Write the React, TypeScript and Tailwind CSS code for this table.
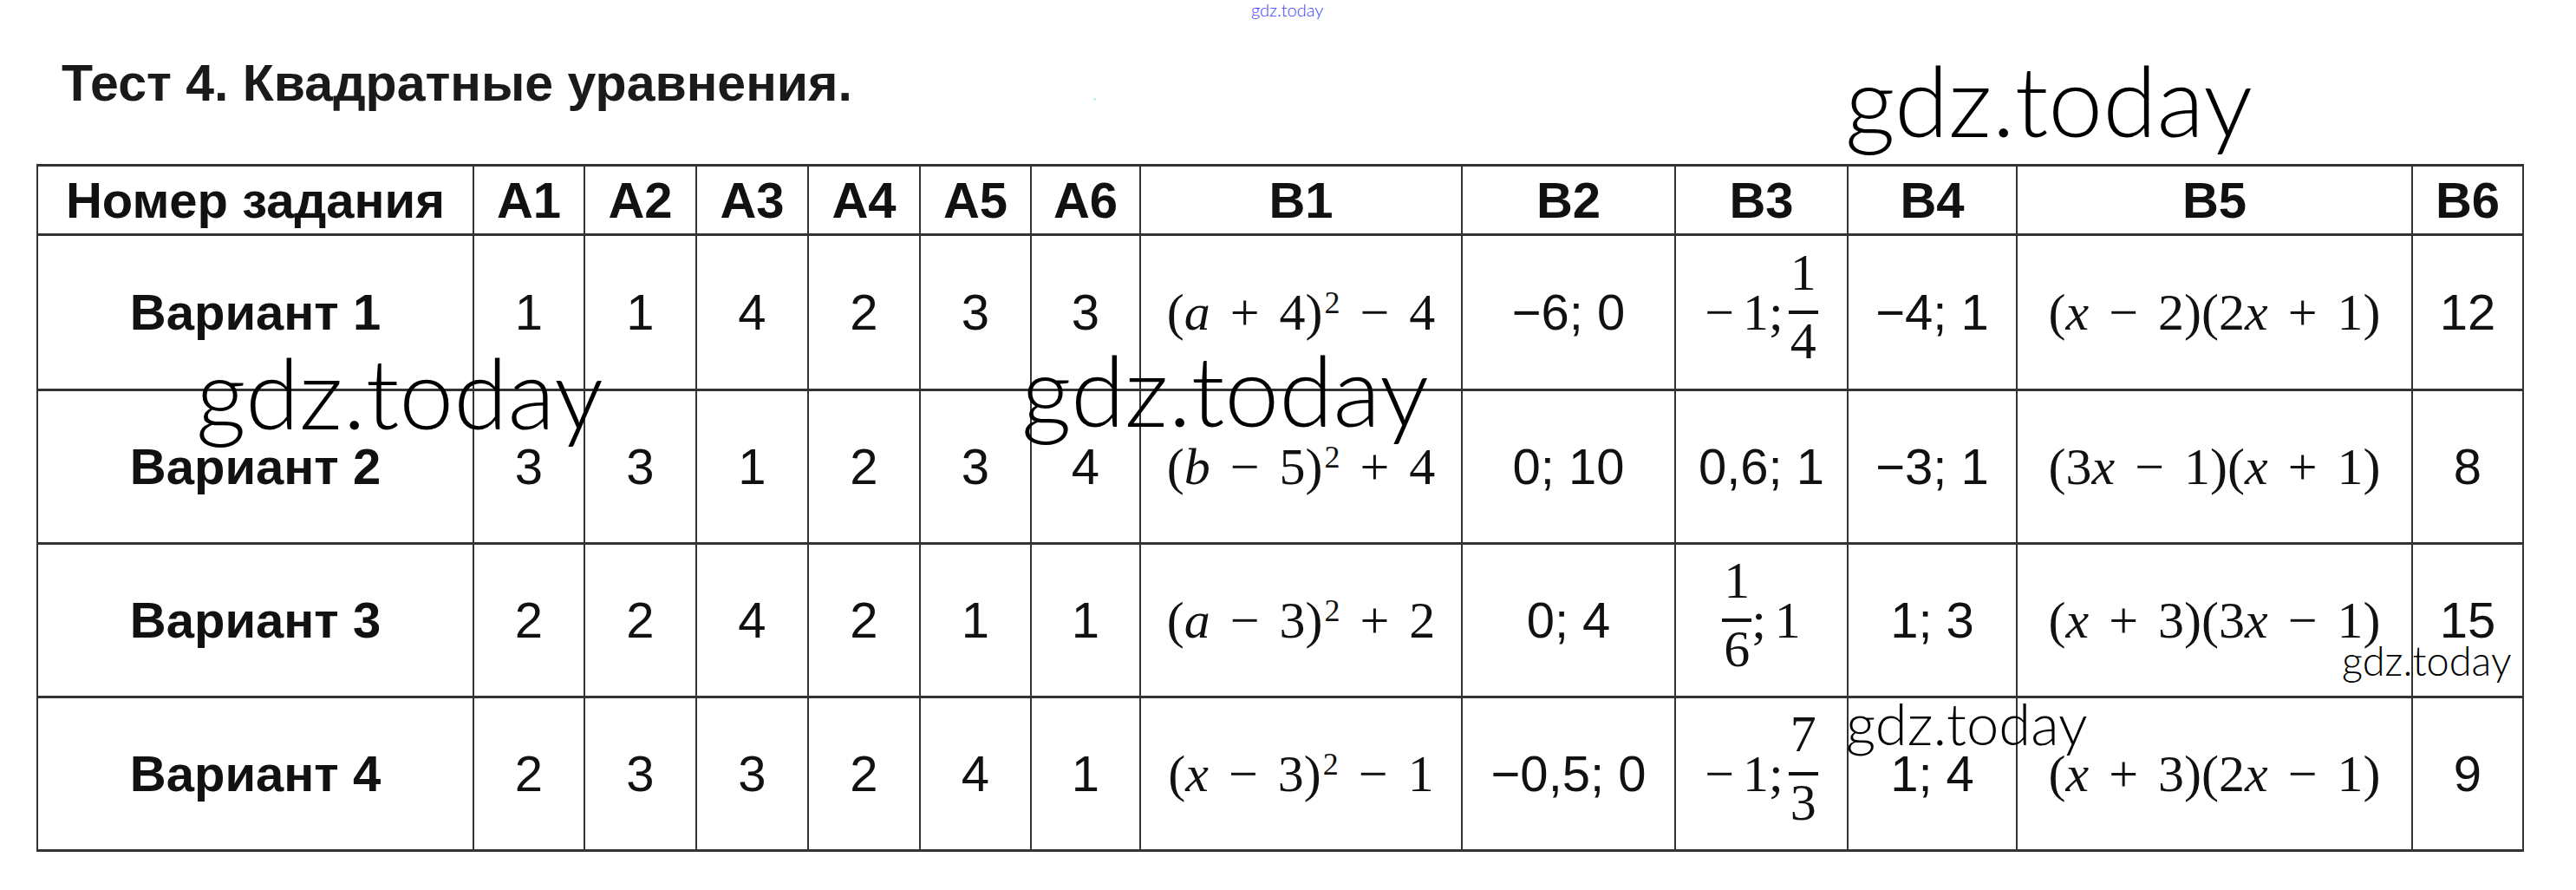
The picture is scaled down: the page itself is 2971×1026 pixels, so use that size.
import React from "react";

const SANS = "font-['Liberation_Sans',Arial,sans-serif]";
const SERIF = "font-['Liberation_Serif','Times_New_Roman',serif]";

function Op({ c }: { c: string }) {
  return <span className="mx-[23px]">{c}</span>;
}

function V({ c }: { c: string }) {
  return <i>{c}</i>;
}

function Sup({ c }: { c: string }) {
  return <span className="relative -top-[19px] ml-[2px] text-[36px]">{c}</span>;
}

function M({ children }: { children: React.ReactNode }) {
  return <span className={`${SERIF} text-[60px] leading-none whitespace-nowrap`}>{children}</span>;
}

function Frac({ n, d }: { n: string; d: string }) {
  return (
    <span className="inline-flex flex-col items-center">
      <span className="leading-none pb-[14px] px-[2px]">{n}</span>
      <span className="h-[4px] w-full bg-[#111]" />
      <span className="leading-none pt-[1px] pb-[13px] px-[2px]">{d}</span>
    </span>
  );
}

function FracCell({ pre, n, d, post }: { pre?: boolean; n: string; d: string; post?: boolean }) {
  return (
    <div className={`${SERIF} text-[60px] leading-none flex items-center justify-center`}>
      {pre && (
        <>
          <span>−</span>
          <span className="ml-[10px]">1;</span>
          <span className="ml-[6px]" />
        </>
      )}
      <Frac n={n} d={d} />
      {post && (
        <>
          <span>;</span>
          <span className="ml-[10px]">1</span>
        </>
      )}
    </div>
  );
}

function T({ c, bold }: { c: string; bold?: boolean }) {
  return (
    <span className={`${SANS} text-[58px] leading-none whitespace-nowrap ${bold ? "font-bold" : ""}`}>{c}</span>
  );
}

const widths = [503, 128, 129, 129, 129, 128, 126, 371, 246, 199, 195, 456, 128];
const headers = ["Номер задания", "А1", "А2", "А3", "А4", "А5", "А6", "В1", "В2", "В3", "В4", "В5", "В6"];

const rows: React.ReactNode[][] = [
  [
    <T c="Вариант 1" bold />,
    <T c="1" />, <T c="1" />, <T c="4" />, <T c="2" />, <T c="3" />, <T c="3" />,
    <M>(<V c="a" /><Op c="+" />4)<Sup c="2" /><Op c="−" />4</M>,
    <T c="−6; 0" />,
    <FracCell pre n="1" d="4" />,
    <T c="−4; 1" />,
    <M>(<V c="x" /><Op c="−" />2)(2<V c="x" /><Op c="+" />1)</M>,
    <T c="12" />,
  ],
  [
    <T c="Вариант 2" bold />,
    <T c="3" />, <T c="3" />, <T c="1" />, <T c="2" />, <T c="3" />, <T c="4" />,
    <M>(<V c="b" /><Op c="−" />5)<Sup c="2" /><Op c="+" />4</M>,
    <T c="0; 10" />,
    <T c="0,6; 1" />,
    <T c="−3; 1" />,
    <M>(3<V c="x" /><Op c="−" />1)(<V c="x" /><Op c="+" />1)</M>,
    <T c="8" />,
  ],
  [
    <T c="Вариант 3" bold />,
    <T c="2" />, <T c="2" />, <T c="4" />, <T c="2" />, <T c="1" />, <T c="1" />,
    <M>(<V c="a" /><Op c="−" />3)<Sup c="2" /><Op c="+" />2</M>,
    <T c="0; 4" />,
    <FracCell n="1" d="6" post />,
    <T c="1; 3" />,
    <M>(<V c="x" /><Op c="+" />3)(3<V c="x" /><Op c="−" />1)</M>,
    <T c="15" />,
  ],
  [
    <T c="Вариант 4" bold />,
    <T c="2" />, <T c="3" />, <T c="3" />, <T c="2" />, <T c="4" />, <T c="1" />,
    <M>(<V c="x" /><Op c="−" />3)<Sup c="2" /><Op c="−" />1</M>,
    <T c="−0,5; 0" />,
    <FracCell pre n="7" d="3" />,
    <T c="1; 4" />,
    <M>(<V c="x" /><Op c="+" />3)(2<V c="x" /><Op c="−" />1)</M>,
    <T c="9" />,
  ],
];

const rowH = ["h-[179px]", "h-[177px]", "h-[177px]", "h-[177px]"];

const WM = "font-['Lato','Inter',sans-serif] font-light leading-none whitespace-nowrap absolute";

export default function App() {
  return (
    <div className="relative w-[2971px] h-[1026px] bg-white overflow-hidden text-[#111]">
      <div className="flex flex-col pt-[67px]">
        <div className={`${SANS} font-bold text-[59px] leading-none pl-[71px] text-[#1a1a1a]`}>
          Тест 4. Квадратные уравнения.
        </div>
        <table className="ml-[42px] mt-[63px] border-collapse table-fixed w-[2869px]">
          <colgroup>
            {widths.map((w, i) => (
              <col key={i} style={{ width: w }} />
            ))}
          </colgroup>
          <thead>
            <tr className="h-[80px]">
              {headers.map((h, i) => (
                <th
                  key={i}
                  className="p-0 border-x-2 border-y-[3px] border-[#333] text-center align-middle font-normal"
                >
                  <T c={h} bold />
                </th>
              ))}
            </tr>
          </thead>
          <tbody>
            {rows.map((r, ri) => (
              <tr key={ri} className={rowH[ri]}>
                {r.map((cell, ci) => (
                  <td key={ci} className="p-0 border-x-2 border-y-[3px] border-[#333] text-center align-middle">
                    <div className="flex items-center justify-center">{cell}</div>
                  </td>
                ))}
              </tr>
            ))}
          </tbody>
        </table>
      </div>

      {/* watermarks */}
      <div className={`${WM} text-[20px] text-[#3b3bff] left-[1443px] top-[1px]`}>gdz.today</div>
      <div className="absolute left-[1261px] top-[113px] w-[3px] h-[3px] bg-[#bfeff2] rounded-full" />
      <div className={`${WM} text-[113px] text-black left-[2128px] top-[58px]`}>gdz.today</div>
      <div className={`${WM} text-[113px] text-black left-[226px] top-[395px]`}>gdz.today</div>
      <div className={`${WM} text-[113px] text-black left-[1178px] top-[392px]`}>gdz.today</div>
      <div className={`${WM} text-[47px] text-black left-[2701px] top-[738px]`}>gdz.today</div>
      <div className={`${WM} text-[67px] text-black left-[2129px] top-[800px]`}>gdz.today</div>
    </div>
  );
}
